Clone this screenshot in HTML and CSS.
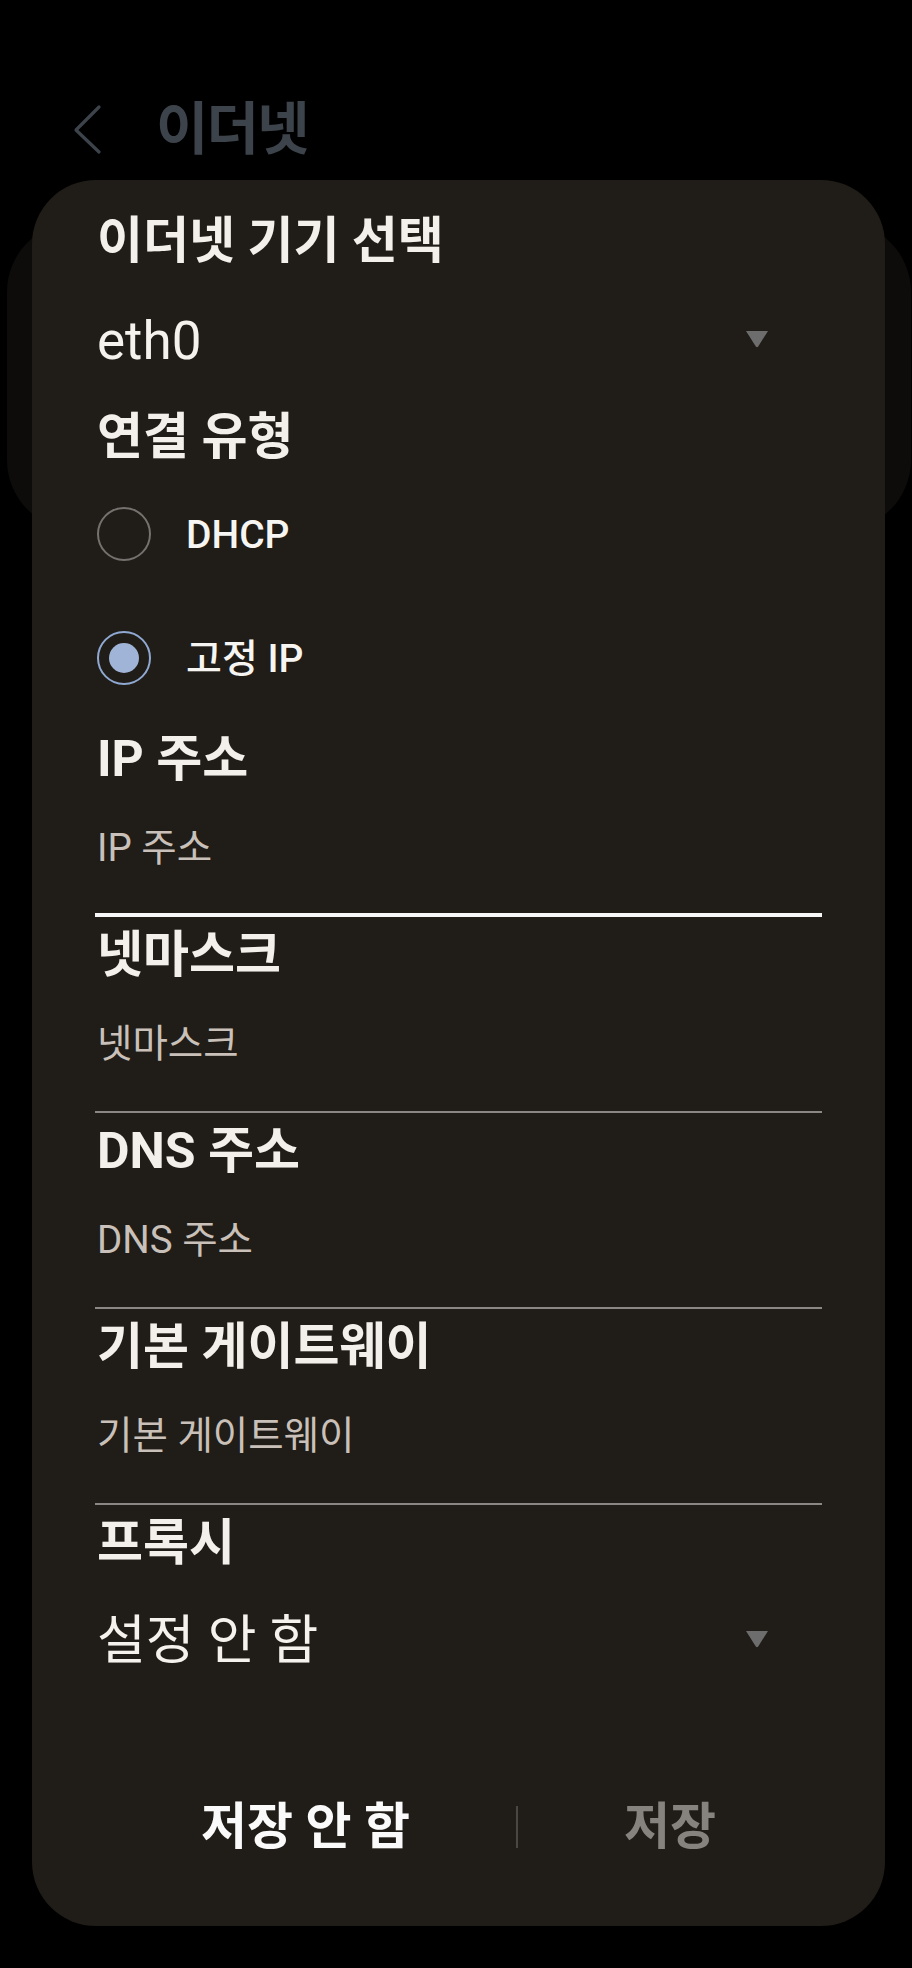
FILE: index.html
```html
<!DOCTYPE html>
<html lang="ko">
<head>
<meta charset="utf-8">
<title>이더넷</title>
<link rel="stylesheet" href="styles.css">
</head>
<body>
<div class="screen">
  <header class="appbar">
    <svg class="back" width="40" height="52" viewBox="0 0 40 52" aria-hidden="true">
      <path d="M31 3 L8 26 L31 48" fill="none" stroke="#3d434b" stroke-width="3.2" stroke-linecap="round" stroke-linejoin="round"/>
    </svg>
    <h1 class="page-title">이더넷</h1>
  </header>
  <div class="under-card"></div>

  <div class="dialog">
    <div class="d-title">이더넷 기기 선택</div>
    <div class="dropdown first">
      <span class="dd-value">eth0</span>
      <svg class="caret" width="24" height="18" viewBox="0 0 24 18" aria-hidden="true"><path d="M1 1 H23 L13.2 16.4 Q12 18 10.8 16.4 Z" fill="#6d6d6d"/></svg>
    </div>
    <div class="d-label conn">연결 유형</div>
    <div class="radios">
      <div class="radio-row">
        <span class="radio"></span>
        <span class="radio-text">DHCP</span>
      </div>
      <div class="radio-row">
        <span class="radio checked"><span class="dot"></span></span>
        <span class="radio-text">고정 IP</span>
      </div>
    </div>

    <div class="field">
      <div class="d-label">IP 주소</div>
      <div class="input focused">IP 주소</div>
    </div>
    <div class="field">
      <div class="d-label">넷마스크</div>
      <div class="input">넷마스크</div>
    </div>
    <div class="field">
      <div class="d-label">DNS 주소</div>
      <div class="input">DNS 주소</div>
    </div>
    <div class="field">
      <div class="d-label">기본 게이트웨이</div>
      <div class="input">기본 게이트웨이</div>
    </div>

    <div class="d-label">프록시</div>
    <div class="dropdown proxy">
      <span class="dd-value">설정 안 함</span>
      <svg class="caret" width="24" height="18" viewBox="0 0 24 18" aria-hidden="true"><path d="M1 1 H23 L13.2 16.4 Q12 18 10.8 16.4 Z" fill="#6d6d6d"/></svg>
    </div>

    <div class="actions">
      <button class="btn primary">저장 안 함</button>
      <span class="divider"></span>
      <button class="btn muted">저장</button>
    </div>
  </div>
</div>
</body>
</html>
```

FILE: styles.css
```css
* { box-sizing: border-box; }

html, body {
  margin: 0;
  padding: 0;
  background: #000;
}

body {
  width: 912px;
  height: 1968px;
  overflow: hidden;
  font-family: Roboto, "Noto Sans CJK KR", sans-serif;
}

.screen {
  position: relative;
  width: 912px;
  height: 1968px;
  padding-top: 90px;
  background: #000;
}

.appbar {
  display: flex;
  align-items: center;
  height: 80px;
  padding-left: 68px;
  gap: 48px;
}

.back { display: block; flex: none; }

.page-title {
  margin: 0;
  font-size: 57px;
  font-weight: 700;
  letter-spacing: -2px;
  line-height: 80px;
  color: #3d434b;
}

.under-card {
  margin: 52px 1px 0 7px;
  height: 308px;
  border-radius: 70px;
  background: #0d0c0b;
}

.dialog {
  position: absolute;
  left: 32px;
  top: 180px;
  width: 853px;
  height: 1746px;
  border-radius: 64px;
  background: #201c17;
  padding: 29px 63px 0 65px;
  color: #f3f0ec;
}

.d-title {
  font-size: 50px;
  font-weight: 700;
  line-height: 64px;
  white-space: nowrap;
}

.dropdown {
  display: flex;
  align-items: center;
  justify-content: space-between;
  padding-right: 53px;
}

.dropdown.first {
  padding-top: 32px;
  padding-bottom: 28px;
}

.dropdown.proxy {
  padding-top: 24px;
}

.dd-value {
  font-size: 53px;
  font-weight: 400;
  line-height: 72px;
  color: #f5f2ee;
  white-space: nowrap;
}

.caret { display: block; flex: none; margin-top: -5px; }

.d-label {
  font-size: 50px;
  font-weight: 700;
  line-height: 76px;
  color: #f3f0ec;
  white-space: nowrap;
}

.d-label.conn {
  line-height: 64px;
}

.radios {
  margin-top: 4px;
}

.radio-row {
  display: flex;
  align-items: center;
  height: 124px;
  gap: 35px;
}

.radio {
  flex: none;
  width: 54px;
  height: 54px;
  border-radius: 50%;
  border: 2.5px solid #74716e;
  display: flex;
  align-items: center;
  justify-content: center;
  margin-top: -3px;
}

.radio.checked {
  border-color: #8fa9d2;
}

.dot {
  width: 30px;
  height: 30px;
  border-radius: 50%;
  background: #9fb4d6;
}

.radio-text {
  font-size: 39px;
  font-weight: 500;
  line-height: 60px;
  color: #f7f5f2;
}

.field {
  height: 196px;
}

.input {
  height: 120px;
  padding-top: 15px;
  font-size: 38.5px;
  line-height: 72px;
  color: #c9c1b9;
  border-bottom: 2px solid #8a8785;
  margin-left: -2px;
  padding-left: 2px;
  white-space: nowrap;
}

.input.focused {
  border-bottom: 4px solid #f7f7f7;
}

.actions {
  display: flex;
  align-items: center;
  margin-top: 100px;
  margin-left: -2px;
  height: 100px;
}

.btn {
  flex: 1 1 auto;
  background: none;
  border: 0;
  padding: 0;
  font-family: Roboto, "Noto Sans CJK KR", sans-serif;
  font-size: 50px;
  font-weight: 700;
  line-height: 60px;
  white-space: nowrap;
  cursor: pointer;
}

.btn.primary { color: #fafafa; }
.btn.muted { color: #86827d; }

.divider {
  flex: none;
  width: 2px;
  height: 42px;
  background: #4b4640;
}
```
